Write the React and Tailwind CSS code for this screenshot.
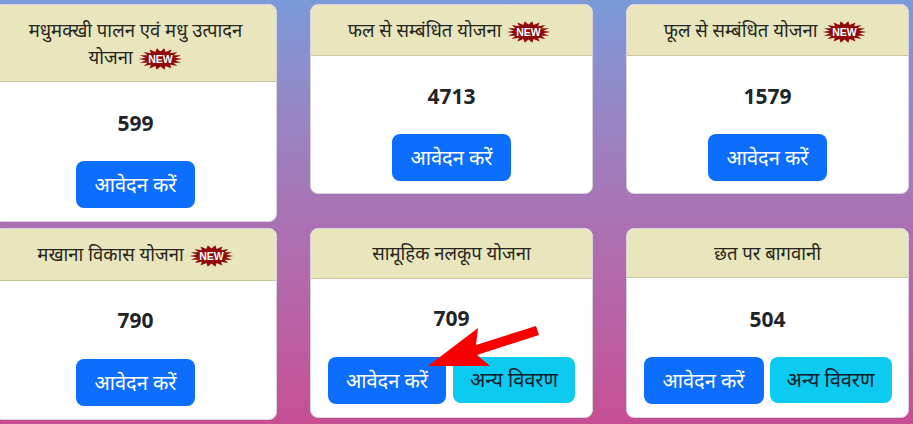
import React from "react";

const burst = (() => {
  const pts = [];
  const n = 18;
  for (let i = 0; i < n * 2; i++) {
    const a = (Math.PI * i) / n;
    const r = i % 2 === 0 ? 1 : 0.68;
    pts.push(`${(22 + 22 * r * Math.cos(a)).toFixed(1)},${(11 + 11 * r * Math.sin(a)).toFixed(1)}`);
  }
  return pts.join(" ");
})();

function New() {
  return (
    <svg width="45" height="22" viewBox="0 0 44 22" className="inline-block align-middle">
      <polygon points={burst} fill="#8f0a0a" />
      <text x="22" y="15" textAnchor="middle" fill="#fff" fontSize="10.5" fontWeight="700" fontFamily="Liberation Sans, sans-serif">NEW</text>
    </svg>
  );
}

function Card({ title, badge, count, other, headClass, bodyClass, btnClass, firstBtn = "w-[119px]", h }) {
  return (
    <div className={`bg-white rounded-lg border border-[#d9d2dd] overflow-hidden flex flex-col ${h}`}>
      <div className={`bg-[#e9e6bd] border-b border-[#c9c79b] text-center text-[18.5px] leading-[27px] text-[#26261e] ${headClass}`}>
        {title}{badge && <> <New /></>}
      </div>
      <div className={`flex-1 flex flex-col items-center ${bodyClass}`}>
        <div className="text-[21px] leading-[26px] font-bold text-[#212529]">{count}</div>
        <div className={`flex ${btnClass}`}>
          <button className={`bg-[#0d6efd] text-white text-[20px] h-[47px] rounded-lg ${firstBtn}`}>आवेदन करें</button>
          {other && <button className="bg-[#0dcaf0] text-[#10202a] text-[20px] h-[46px] w-[122px] rounded-lg">अन्य विवरण</button>}
        </div>
      </div>
    </div>
  );
}

export default function App() {
  return (
    <div className="relative w-[913px] h-[424px] overflow-hidden bg-gradient-to-b from-[#7a9ad8] via-[#a873b4] to-[#c64e93] font-['Noto_Sans','Liberation_Sans',sans-serif]">
      <div className="-ml-[6px] pt-[4px] w-[916px] grid grid-cols-[283px_283px_283px] gap-x-[33px] gap-y-[6px] items-start">
        <Card h="h-[218px]" title="मधुमक्खी पालन एवं मधु उत्पादन योजना" badge count="599" headClass="pt-[11px] h-[77px] px-[24px]" bodyClass="pt-[28px]" btnClass="mt-[25px]" />
        <Card h="h-[190px]" title="फल से सम्बंधित योजना" badge count="4713" headClass="pt-[11px] h-[51px] pl-[16px] pr-[20px]" bodyClass="pt-[27px]" btnClass="mt-[25px]" />
        <Card h="h-[190px]" title="फूल से सम्बंधित योजना" badge count="1579" headClass="pt-[11px] h-[51px] pl-[16px] pr-[20px]" bodyClass="pt-[27px]" btnClass="mt-[25px]" />
        <Card h="h-[192px]" title="मखाना विकास योजना " badge count="790" headClass="pt-[11px] h-[52px] px-4" bodyClass="pt-[26px]" btnClass="mt-[26px]" />
        <Card h="h-[190px]" title="सामूहिक नलकूप योजना" count="709" other headClass="pt-[10px] h-[50px] px-4" bodyClass="pt-[26px]" btnClass="mt-[26px] gap-[7px]" firstBtn="w-[118px]" />
        <Card h="h-[190px]" title="छत पर बागवानी" count="504" other headClass="pt-[10px] h-[49px] px-4" bodyClass="pt-[28px]" btnClass="mt-[25px] gap-[6px]" firstBtn="w-[120px]" />
      </div>
      <svg className="absolute left-0 top-0 pointer-events-none" width="913" height="424" viewBox="0 0 913 424">
        <polygon points="428,366 478,328 476,345 536,326 539,335 477,355 490,366" fill="#f80000" />
      </svg>
    </div>
  );
}
